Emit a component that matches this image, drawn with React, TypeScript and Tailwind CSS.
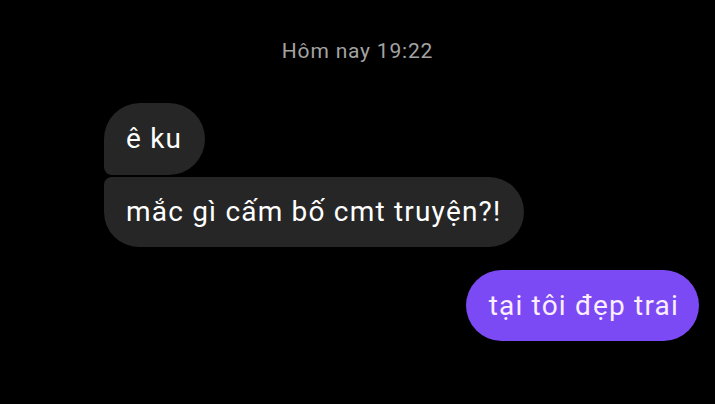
const App = () => {
  return (
    <div
      className="w-[715px] h-[404px] bg-black overflow-hidden flex flex-col"
      style={{ fontFamily: "Roboto, 'Noto Sans', sans-serif" }}
    >
      <div className="pt-[37px] text-center text-[21px] leading-[28px] tracking-[0.8px] text-[#a3a3a3]">
        Hôm nay 19:22
      </div>

      <div className="mt-[38px] pl-[104px] flex flex-col items-start gap-[2px]">
        <div className="h-[72px] pl-[22px] pr-[23px] flex items-center bg-[#262626] text-white text-[28px] tracking-[1.2px] rounded-[36px] rounded-bl-[8px]">
          ê ku
        </div>
        <div className="h-[70px] pl-[22px] pr-[23px] flex items-center bg-[#262626] text-white text-[28px] tracking-[1.2px] rounded-[36px] rounded-tl-[8px]">
          mắc gì cấm bố cmt truyện?!
        </div>
      </div>

      <div className="mt-[23px] pr-[16px] flex justify-end">
        <div className="h-[71px] pl-[23px] pr-[20px] flex items-center bg-[#7b4af4] text-[#fbeefe] text-[28px] tracking-[1.2px] rounded-full">
          tại tôi đẹp trai
        </div>
      </div>
    </div>
  );
};

export default App;
